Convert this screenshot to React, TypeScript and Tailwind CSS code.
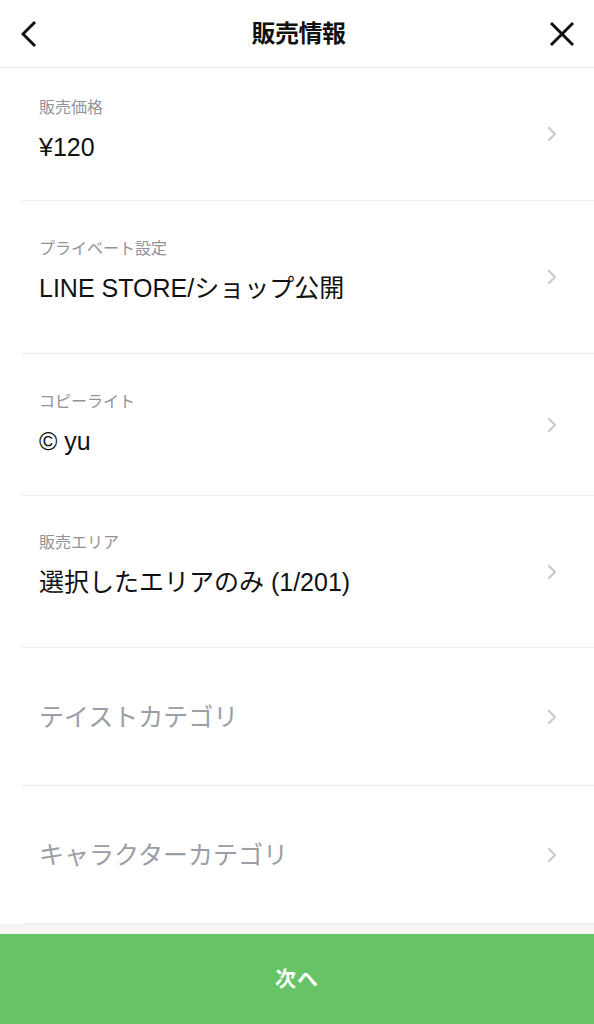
import React from "react";

const FONT = { fontFamily: '"Liberation Sans", "Noto Sans CJK JP", sans-serif' };

function Chevron() {
  return (
    <svg width="10" height="16" viewBox="0 0 10 16" className="shrink-0">
      <polyline points="2,2 8,8 2,14" fill="none" stroke="#c7cad0" strokeWidth="2.2" strokeLinecap="round" strokeLinejoin="round" />
    </svg>
  );
}

function InfoRow({ h, pt, label, value }: { h: string; pt: string; label: string; value: string }) {
  return (
    <div className={`ml-[22px] ${h} border-b border-[#ececec] pl-[17px] pr-[37px] flex items-center`}>
      <div className={`flex-1 self-start ${pt}`}>
        <div className="text-[16px] leading-[20px] text-[#8f949c]">{label}</div>
        <div className="mt-[14px] text-[25px] leading-[30px] text-[#111]">{value}</div>
      </div>
      <Chevron />
    </div>
  );
}

function PlaceholderRow({ text }: { text: string }) {
  return (
    <div className="ml-[22px] h-[138px] border-b border-[#ececec] pl-[17px] pr-[37px] flex items-center">
      <div className="flex-1 text-[25px] leading-[30px] text-[#9a9ea6]">{text}</div>
      <Chevron />
    </div>
  );
}

export default function App() {
  return (
    <div className="w-[594px] h-[1024px] bg-white flex flex-col overflow-hidden" style={FONT}>
      {/* Header */}
      <div className="h-[68px] shrink-0 flex items-center border-b border-[#e6e6e6] pl-[21px] pr-[18px]">
        <div className="w-[40px] flex items-center">
          <svg width="16" height="28" viewBox="0 0 16 28">
            <polyline points="14,2 2,14 14,26" fill="none" stroke="#111" strokeWidth="3" strokeLinejoin="miter" />
          </svg>
        </div>
        <div className="flex-1 text-center text-[24px] font-bold text-[#111] leading-none tracking-[-0.5px]">販売情報</div>
        <div className="w-[40px] flex items-center justify-end">
          <svg width="28" height="28" viewBox="0 0 28 28">
            <line x1="3" y1="3" x2="25" y2="25" stroke="#111" strokeWidth="3" />
            <line x1="25" y1="3" x2="3" y2="25" stroke="#111" strokeWidth="3" />
          </svg>
        </div>
      </div>

      {/* Rows */}
      <InfoRow h="h-[133px]" pt="pt-[30px]" label="販売価格" value="¥120" />
      <InfoRow h="h-[153px]" pt="pt-[38px]" label="プライベート設定" value="LINE STORE/ショップ公開" />
      <InfoRow h="h-[142px]" pt="pt-[38px]" label="コピーライト" value="© yu" />
      <InfoRow h="h-[152px]" pt="pt-[37px]" label="販売エリア" value="選択したエリアのみ (1/201)" />
      <PlaceholderRow text="テイストカテゴリ" />
      <PlaceholderRow text="キャラクターカテゴリ" />

      {/* Bottom */}
      <div className="h-[10px] shrink-0 bg-[#f5f5f5]" />
      <div className="flex-1 bg-[#66c466] flex items-center justify-center">
        <span className="text-white text-[21px] font-bold tracking-[1px]">次へ</span>
      </div>
    </div>
  );
}
